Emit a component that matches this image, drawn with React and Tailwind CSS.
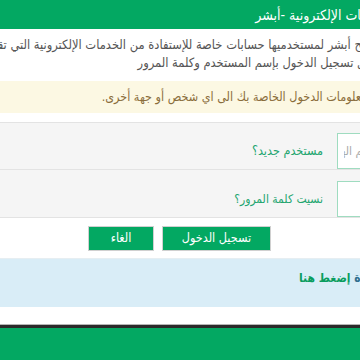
import React from "react";

const font = { fontFamily: '"DejaVu Sans Condensed", "DejaVu Sans", sans-serif' };

const App = () => {
  return (
    <div className="w-[360px] h-[360px] overflow-hidden bg-white" style={font}>
      <div dir="rtl" className="w-[410px] flex flex-col">
        {/* Header */}
        <div className="h-[29px] bg-[#03a862] flex items-center pr-[20px]">
          <h1 className="text-[14px] text-white whitespace-nowrap leading-none">
            الخدمات الإلكترونية -أبشر
          </h1>
        </div>

        {/* Intro */}
        <div className="pt-[7px] pr-[12px] text-[12.8px] leading-[18px] text-[#555]">
          <p className="whitespace-nowrap pr-[26px]">
            تتيح أبشر لمستخدميها حسابات خاصة للإستفادة من الخدمات الإلكترونية التي تقدمها مجموعة
          </p>
          <p className="whitespace-nowrap">من خلال تسجيل الدخول بإسم المستخدم وكلمة المرور</p>
        </div>

        {/* Warning */}
        <div className="mt-[9px] h-[32px] bg-[#fcf8e3] flex items-center pr-[2px]">
          <p className="text-[12.5px] text-[#8a6d3b] whitespace-nowrap">
            لا تعطي معلومات الدخول الخاصة بك الى اي شخص أو جهة أخرى.
          </p>
        </div>

        {/* Form panel */}
        <div className="mt-[9px] bg-[#f5f5f5] border-t border-[#e3e3e3]">
          <div className="flex items-center gap-[14px] pt-[10px] pr-[30px] border-b border-[#e3e3e3]">
            <input
              className="w-[43px] h-[36px] border border-[#9fdcc0] bg-white px-[6px] text-[12px] outline-none placeholder:text-[#aaa]"
              placeholder="رقم الهوية"
            />
            <a className="text-[12.5px] text-[#22a56f] whitespace-nowrap">مستخدم جديد؟</a>
          </div>
          <div className="flex items-center gap-[14px] pt-[11px] pr-[30px] border-b border-[#e3e3e3]">
            <input
              type="password"
              className="w-[43px] h-[36px] border border-[#9fdcc0] bg-white px-[6px] text-[12px] outline-none"
            />
            <a className="text-[12px] text-[#22a56f] whitespace-nowrap">نسيت كلمة المرور؟</a>
          </div>
        </div>

        {/* Buttons */}
        <div className="flex gap-[8px] pt-[8px] pb-[7px] pr-[139px] border-b border-[#e6eef2]">
          <button className="w-[109px] h-[25px] bg-[#03a862] border border-[#d0d0d0] text-white text-[12.5px]">
            تسجيل الدخول
          </button>
          <button className="w-[66px] h-[25px] bg-[#03a862] border border-[#d0d0d0] text-white text-[12.5px]">
            الغاء
          </button>
        </div>

        {/* Help */}
        <div className="h-[48px] bg-[#d9edf7] pt-[12px] pr-[5px]">
          <p className="text-[12px] leading-[14px] font-bold whitespace-nowrap">
            <span className="text-[#31708f]">للمساعدة </span>
            <span className="text-[#0a9d5e]">إضغط هنا</span>
          </p>
        </div>

        <div className="h-[17px] bg-white" />

        {/* Footer */}
        <div className="h-[1px] bg-[#b5b5b5]" />
        <div className="h-[3px] bg-[#2a2a2a]" />
        <div className="h-[40px] bg-[#03a862]" />
      </div>
    </div>
  );
};

export default App;
